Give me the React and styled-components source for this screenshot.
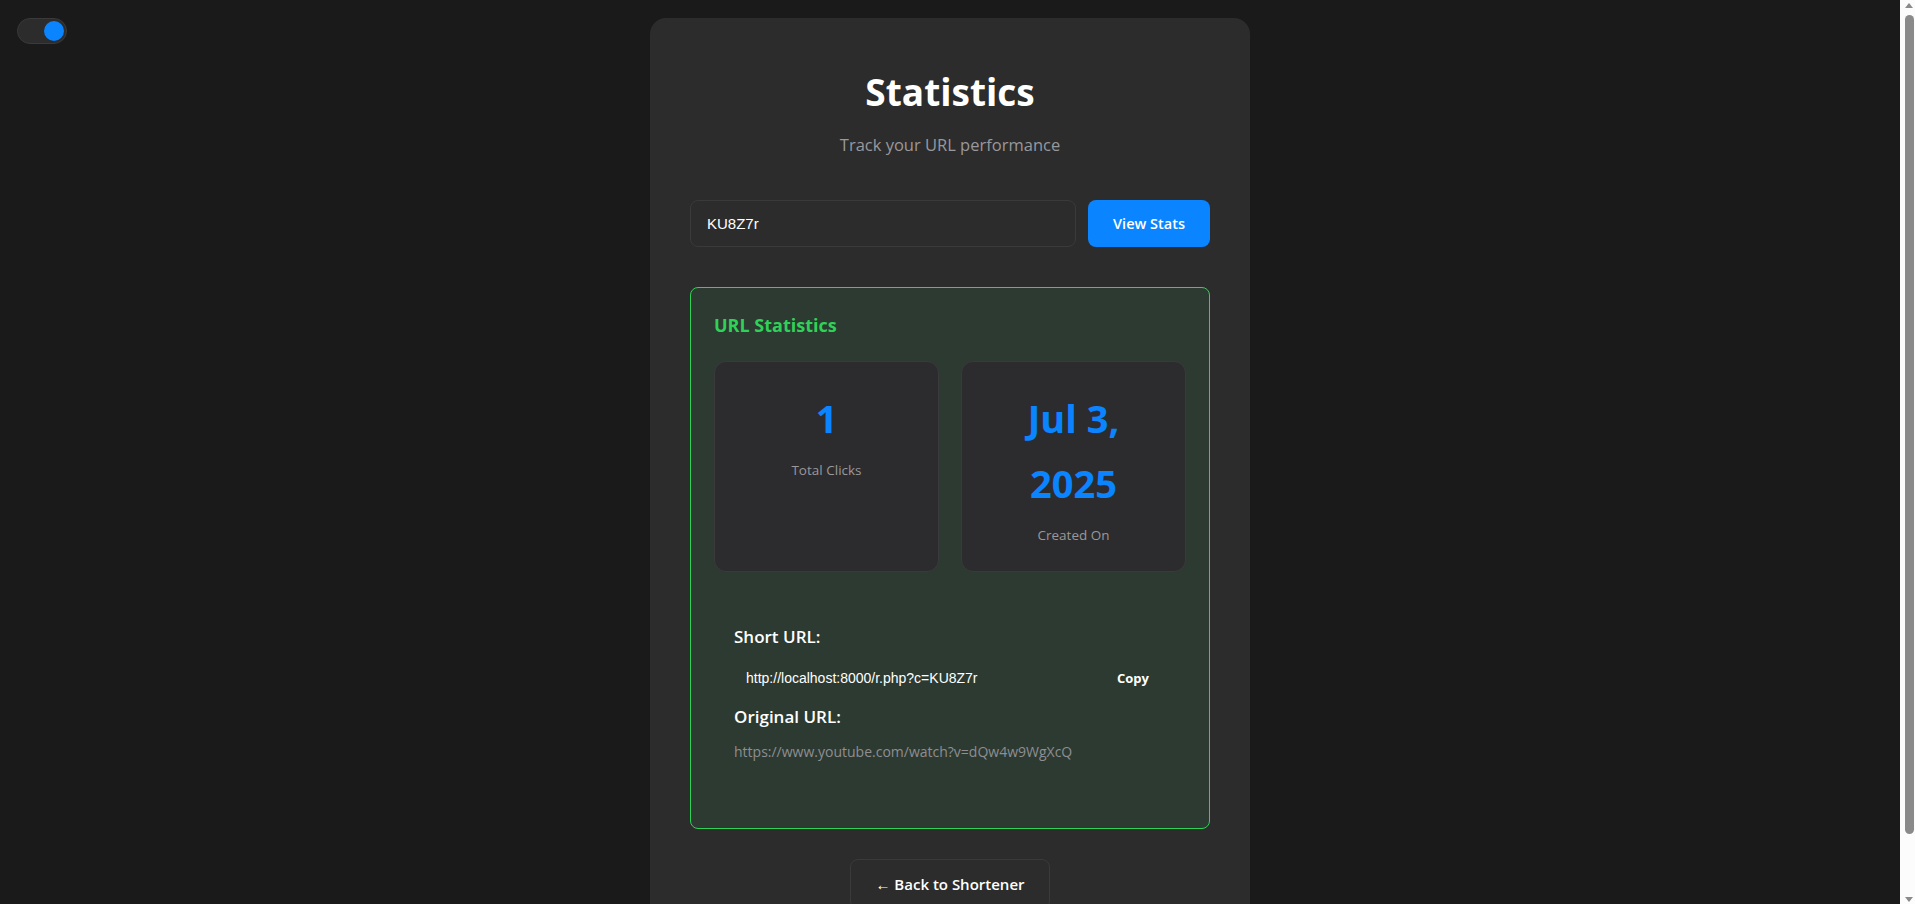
import React, { useState } from 'react';
import styled, { createGlobalStyle } from 'styled-components';

const GlobalStyle = createGlobalStyle`
  * {
    box-sizing: border-box;
  }

  body {
    margin: 0;
    background: #1a1a1a;
    color: #ffffff;
    font-family: "Open Sans", "Noto Sans", sans-serif;
    line-height: 1.6;
  }
`;

const Page = styled.main`
  min-height: 100vh;
  padding: 18px 35px 18px 20px;
  display: flex;
  justify-content: center;
  align-items: flex-start;
`;

/* window scrollbar as it shows in the reference */
const ScrollTrack = styled.div`
  position: fixed;
  top: 0;
  right: 0;
  width: 15px;
  height: 100vh;
  background: #fcfcfc;
`;

const ScrollThumb = styled.div`
  position: absolute;
  top: 15px;
  left: 5px;
  width: 9px;
  height: 819px;
  border-radius: 5px;
  background: #8a8a8a;
`;

const ScrollArrow = styled.div`
  position: absolute;
  left: 5px;
  width: 0;
  height: 0;
  border-left: 4px solid transparent;
  border-right: 4px solid transparent;
  ${({ $down }) =>
    $down
      ? 'bottom: 2px; border-top: 5px solid #8a8a8a;'
      : 'top: 3px; border-bottom: 5px solid #8a8a8a;'}
`;

const ThemeToggle = styled.button`
  position: fixed;
  top: 18px;
  left: 17px;
  width: 50px;
  height: 26px;
  padding: 0;
  border-radius: 13px;
  border: 1px solid #3a3a3a;
  background: #2c2c2c;
  cursor: pointer;

  &::after {
    content: '';
    position: absolute;
    top: 2px;
    left: ${({ $on }) => ($on ? '26px' : '2px')};
    width: 20px;
    height: 20px;
    border-radius: 50%;
    background: #0a84ff;
    transition: left 0.2s;
  }
`;

const Card = styled.section`
  width: 600px;
  background: #2c2c2c;
  border-radius: 16px;
  padding: 44px 40px 40px;
`;

const Title = styled.h1`
  margin: 0;
  font-size: 37px;
  font-weight: 700;
  text-align: center;
  color: #ffffff;
`;

const Subtitle = styled.p`
  margin: 11px 0 41px;
  font-size: 16.5px;
  text-align: center;
  color: #98989d;
`;

const SearchForm = styled.form`
  display: flex;
  gap: 12px;
  margin-bottom: 40px;
`;

const CodeInput = styled.input`
  flex: 1;
  height: 47px;
  padding: 0 16px;
  border: 1px solid #3a3a3a;
  border-radius: 8px;
  background: #2c2c2c;
  color: #ffffff;
  font-family: "Liberation Sans", Arial, sans-serif;
  font-size: 15px;
  outline: none;
`;

const PrimaryButton = styled.button`
  height: 47px;
  padding: 0 25px;
  border: none;
  border-radius: 8px;
  background: #0a84ff;
  color: #ffffff;
  font-family: inherit;
  font-size: 14.5px;
  font-weight: 600;
  cursor: pointer;
`;

const StatsBox = styled.div`
  border: 1px solid #30d158;
  border-radius: 8px;
  background: #2d3a31;
  padding: 23px 23px 43px;
`;

const BoxTitle = styled.h3`
  margin: 0 0 22px;
  font-size: 18px;
  font-weight: 700;
  color: #30d158;
`;

const StatGrid = styled.div`
  display: grid;
  grid-template-columns: 1fr 1fr;
  gap: 22px;
`;

const StatCard = styled.div`
  background: #2c2c2e;
  border: 1px solid #3a3a3c;
  border-radius: 12px;
  padding: 24px 20px;
  text-align: center;
`;

const StatValue = styled.div`
  font-size: 38px;
  font-weight: 700;
  line-height: 65px;
  color: #0a84ff;
`;

const StatLabel = styled.div`
  margin-top: 9px;
  font-size: 13.5px;
  color: #98989d;
`;

const InfoSection = styled.div`
  margin-top: 31px;
  padding: 20px 20px 21px;
`;

const InfoLabel = styled.h4`
  margin: 0;
  font-size: 17px;
  font-weight: 600;
  color: #ffffff;
`;

const UrlRow = styled.div`
  display: flex;
  align-items: center;
  margin: 11px 0 8px;
`;

const UrlField = styled.input`
  flex: 1;
  padding: 8px 12px;
  border: none;
  background: transparent;
  color: #ffffff;
  font-family: "Liberation Sans", Arial, sans-serif;
  font-size: 14px;
  outline: none;
`;

const CopyButton = styled.button`
  padding: 8px 17px;
  border: none;
  background: transparent;
  color: #ffffff;
  font-family: inherit;
  font-size: 13px;
  font-weight: 700;
  cursor: pointer;
`;

const OriginalUrl = styled.p`
  margin: 11px 0 0;
  font-size: 14px;
  color: #8e8e93;
  word-break: break-all;
`;

const Footer = styled.div`
  display: flex;
  justify-content: center;
  margin-top: 30px;
`;

const GhostButton = styled.button`
  padding: 12px 24px;
  border: 1px solid #3a3a3a;
  border-radius: 8px;
  background: transparent;
  color: #ffffff;
  font-family: inherit;
  font-size: 15px;
  font-weight: 600;
  line-height: 1.6;
  cursor: pointer;
`;

export default function App() {
  const [dark, setDark] = useState(true);
  const [code, setCode] = useState('KU8Z7r');
  const shortUrl = 'http://localhost:8000/r.php?c=KU8Z7r';

  return (
    <>
      <GlobalStyle />
      <ThemeToggle $on={dark} onClick={() => setDark(!dark)} aria-label="Toggle theme" />
      <ScrollTrack>
        <ScrollArrow />
        <ScrollThumb />
        <ScrollArrow $down />
      </ScrollTrack>
      <Page>
        <Card>
          <Title>Statistics</Title>
          <Subtitle>Track your URL performance</Subtitle>

          <SearchForm onSubmit={(e) => e.preventDefault()}>
            <CodeInput value={code} onChange={(e) => setCode(e.target.value)} />
            <PrimaryButton type="submit">View Stats</PrimaryButton>
          </SearchForm>

          <StatsBox>
            <BoxTitle>URL Statistics</BoxTitle>
            <StatGrid>
              <StatCard>
                <StatValue>1</StatValue>
                <StatLabel>Total Clicks</StatLabel>
              </StatCard>
              <StatCard>
                <StatValue>Jul 3, 2025</StatValue>
                <StatLabel>Created On</StatLabel>
              </StatCard>
            </StatGrid>

            <InfoSection>
              <InfoLabel>Short URL:</InfoLabel>
              <UrlRow>
                <UrlField readOnly value={shortUrl} />
                <CopyButton type="button">Copy</CopyButton>
              </UrlRow>
              <InfoLabel>Original URL:</InfoLabel>
              <OriginalUrl>https://www.youtube.com/watch?v=dQw4w9WgXcQ</OriginalUrl>
            </InfoSection>
          </StatsBox>

          <Footer>
            <GhostButton type="button">← Back to Shortener</GhostButton>
          </Footer>
        </Card>
      </Page>
    </>
  );
}
